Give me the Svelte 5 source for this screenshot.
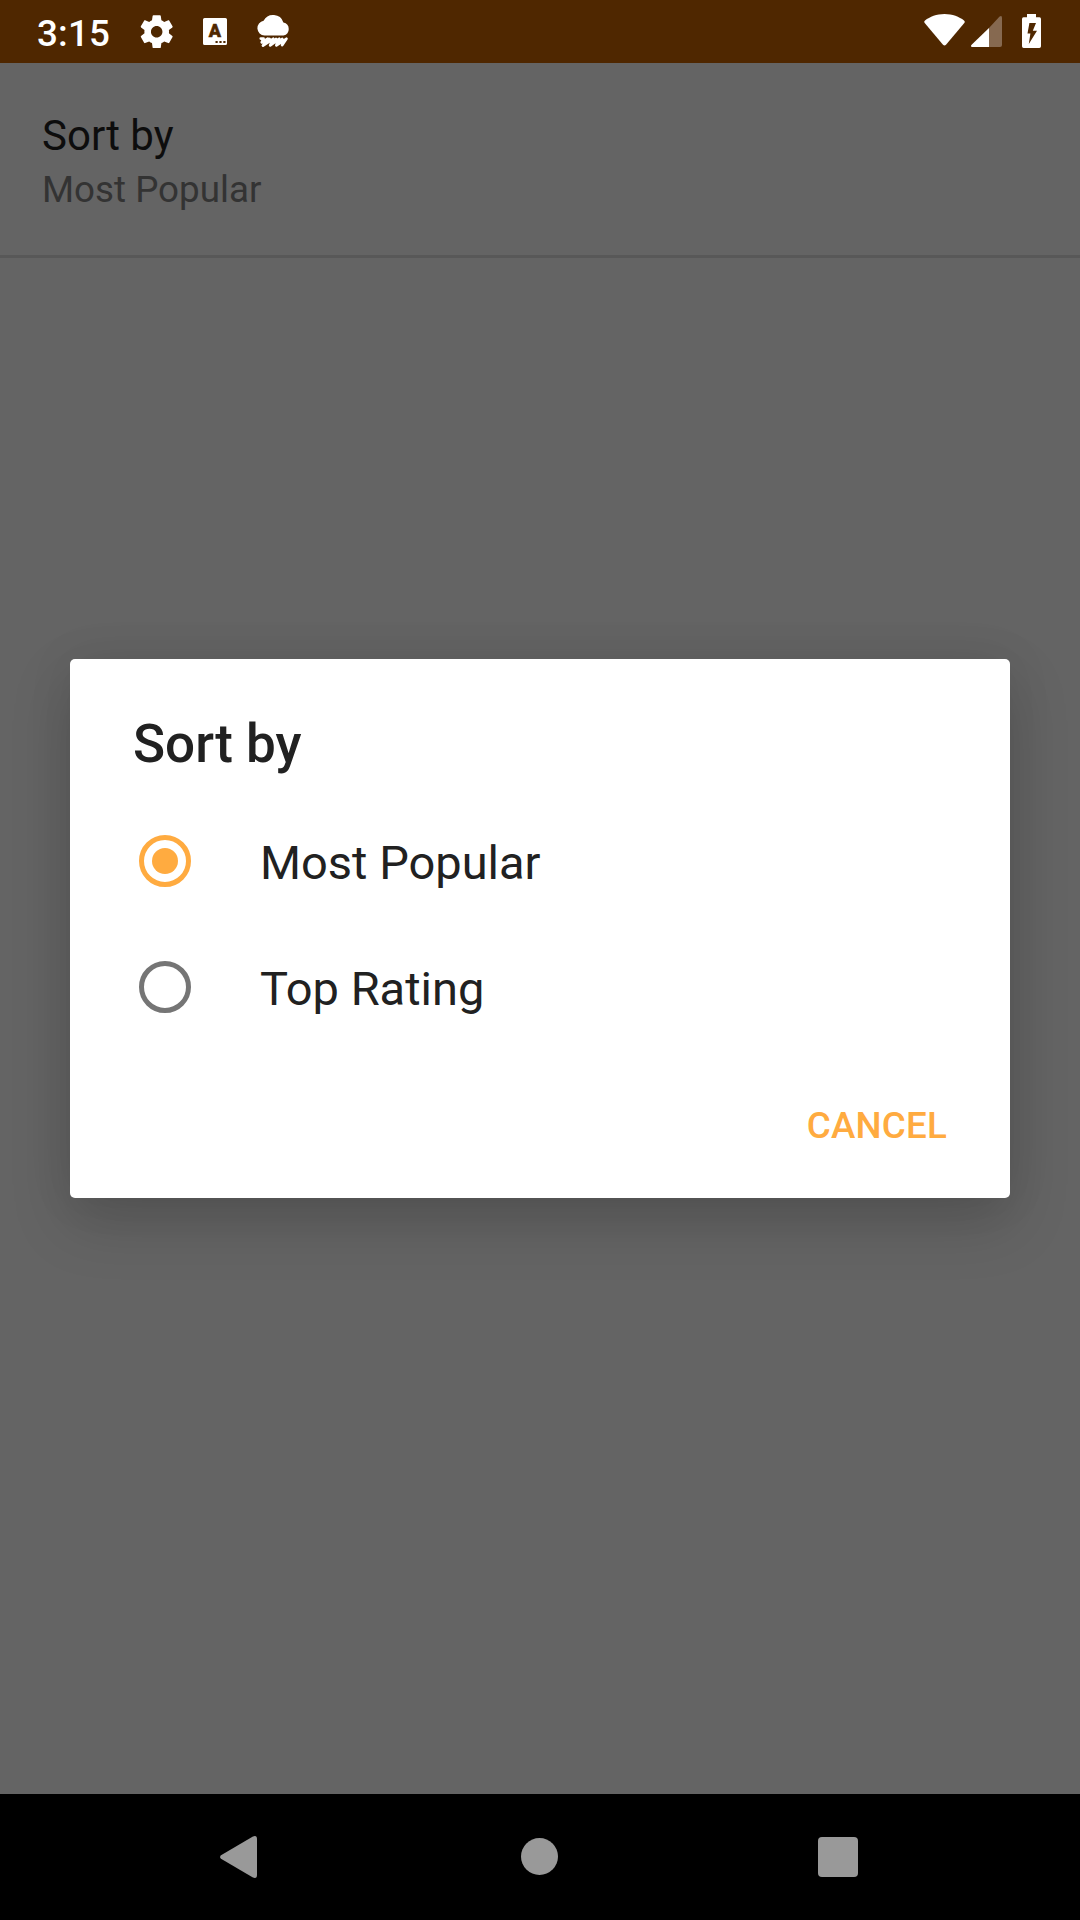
<script>
  let selected = $state('Most Popular');
  const options = ['Most Popular', 'Top Rating'];
</script>

<div class="screen">
  <header class="status">
    <span class="time">3:15</span>
    <div class="notifications">
      <svg class="gear" viewBox="0 0 24 24"><path d="M19.43 12.98c.04-.32.07-.64.07-.98s-.03-.66-.07-.98l2.11-1.65c.19-.15.24-.42.12-.64l-2-3.46c-.12-.22-.39-.3-.61-.22l-2.49 1c-.52-.4-1.08-.73-1.69-.98l-.38-2.65C14.46 2.18 14.25 2 14 2h-4c-.25 0-.46.18-.49.42l-.38 2.65c-.61.25-1.17.59-1.69.98l-2.49-1c-.23-.09-.49 0-.61.22l-2 3.46c-.13.22-.07.49.12.64l2.11 1.65c-.04.32-.07.65-.07.98s.03.66.07.98l-2.11 1.65c-.19.15-.24.42-.12.64l2 3.46c.12.22.39.3.61.22l2.49-1c.52.4 1.08.73 1.69.98l.38 2.65c.03.24.24.42.49.42h4c.25 0 .46-.18.49-.42l.38-2.65c.61-.25 1.17-.59 1.69-.98l2.49 1c.23.09.49 0 .61-.22l2-3.46c.12-.22.07-.49-.12-.64l-2.11-1.65zM12 15.5c-1.93 0-3.5-1.57-3.5-3.5s1.57-3.5 3.5-3.5 3.5 1.57 3.5 3.5-1.57 3.5-3.5 3.5z" /></svg>
      <svg class="letter" viewBox="0 0 24 27">
        <path fill-rule="evenodd" d="M1.6 0H22.4Q24 0 24 1.6V25.4Q24 27 22.4 27H1.6Q0 27 0 25.4V1.6Q0 0 1.6 0ZM12.5 22.9V25.1H14.7V22.9ZM16.4 22.9V25.1H18.6V22.9ZM20.3 22.9V25.1H22.5V22.9Z" />
        <text x="12" y="19.2" text-anchor="middle">A</text>
      </svg>
      <svg class="rain" viewBox="0 0 33 34">
        <path d="M7.5 21.5A7.4 7.4 0 0 1 6.6 6.8A10.8 10.8 0 0 1 26.4 8.4A6.7 6.7 0 0 1 26.5 21.5Z" />
        <path class="drops" d="M3.8 24.6H6.5L4.8 28.4L10.8 24.8L6 31.6L16.2 24.8L13.2 31.4L22.2 24.8L19.4 31.4L29.4 24.8L25.2 31M8.5 28.6L12.5 25M14.8 29L19 25M21 29L25.2 25" />
      </svg>
    </div>
    <div class="system">
      <svg class="wifi" viewBox="0 0 41 32"><path d="M20.5 0C12.7 0 5.7 2.8 1 6.4Q-.4 7.6.7 9L19 30.8Q20.5 32.4 22 30.8L40.3 9Q41.4 7.6 40 6.4C35.3 2.8 28.3 0 20.5 0Z" /></svg>
      <svg class="signal" viewBox="0 0 31 31"><path class="dim" d="M18 12L28.6.6Q31-1 31 2V29Q31 31 29 31H18Z" /><path d="M18 12V31H1.2Q-1 30.8.6 28.8Z" /></svg>
      <svg class="battery" viewBox="0 0 19 34"><path fill-rule="evenodd" d="M5 0H14V3.3H17.5Q19 3.3 19 5V32.3Q19 34 17.3 34H1.7Q0 34 0 32.3V5Q0 3.3 1.5 3.3H5ZM7.4 9L5.5 19.5H8.4L6.8 30L15 16.7H10.8L14 9Z" /></svg>
    </div>
  </header>

  <main>
    <section class="preference">
      <div class="pref-title">Sort by</div>
      <div class="pref-summary">{selected}</div>
    </section>

    <div class="dialog" role="dialog" aria-label="Sort by">
      <h2>Sort by</h2>
      <div class="options" role="radiogroup" aria-label="Sort by">
        {#each options as option}
          <button class="option" role="radio" aria-checked={selected === option} onclick={() => (selected = option)}>
            <span class="radio" class:checked={selected === option}></span>
            <span class="label">{option}</span>
          </button>
        {/each}
      </div>
      <div class="actions"><button class="cancel">CANCEL</button></div>
    </div>
  </main>

  <nav>
    <svg class="back" viewBox="0 0 37 42"><path d="M1 19.2L32.5.7Q37-1.3 37 3V39Q37 43.3 32.5 41.3L1 22.8Q-.9 21 1 19.2Z" /></svg>
    <svg class="home" viewBox="0 0 37 37"><circle cx="18.5" cy="18.5" r="18.5" /></svg>
    <span class="recents"></span>
  </nav>
</div>

<style>
  :global(body) { margin: 0; background: #646464; }
  .screen {
    display: flex;
    flex-direction: column;
    width: 1080px;
    height: 1920px;
    overflow: hidden;
    background: #646464;
    font-family: Roboto, sans-serif;
  }
  svg { display: block; fill: #fff; flex: none; }
  button { border: 0; background: none; padding: 0; font: inherit; text-align: left; }

  .status {
    display: flex;
    align-items: flex-start;
    box-sizing: border-box;
    height: 63px;
    flex: none;
    padding: 0 39px 0 37px;
    background: #4f2700;
    color: #fff;
  }
  .time { width: 100px; padding-top: 12px; font-size: 36.75px; line-height: 44px; font-weight: 500; letter-spacing: 0.2px; }
  .notifications { display: flex; align-items: flex-start; }
  .gear { width: 39.4px; height: 39.4px; margin-top: 12px; }
  .letter { width: 24px; height: 27px; margin: 18px 0 0 26.6px; }
  .letter text { font-size: 18px; font-weight: 900; fill: #4f2700; stroke: #4f2700; stroke-width: 0.5; }
  .rain { width: 33px; height: 34px; margin: 14px 0 0 29.8px; overflow: visible; }
  .drops { fill: none; stroke: #fff; stroke-width: 2.8; stroke-linecap: round; stroke-linejoin: round; }
  .system { display: flex; align-items: flex-start; margin-left: auto; }
  .wifi { width: 41px; height: 32px; margin: 14px 6px 0 0; }
  .signal { width: 31px; height: 31px; margin: 16px 20px 0 0; }
  .dim { fill: #866950; }
  .battery { width: 19px; height: 34px; margin-top: 14px; }

  main { display: flex; flex-direction: column; flex: 1; }
  .preference {
    box-sizing: border-box;
    height: 195px;
    padding: 48px 42px 0;
    border-bottom: 3px solid #585858;
  }
  .pref-title { font-size: 42px; line-height: 50px; color: #0d0d0d; }
  .pref-summary { margin-top: 7px; font-size: 36.75px; line-height: 44px; color: #333; }

  .dialog {
    box-sizing: border-box;
    width: 940px;
    height: 539px;
    margin: 401px auto 0;
    padding-top: 54px;
    border-radius: 5px;
    background: #fff;
    box-shadow: 0 24px 60px rgba(0, 0, 0, 0.17), 0 0 48px rgba(0, 0, 0, 0.07);
    color: #212121;
  }
  h2 { margin: 0 63px; font-size: 53px; line-height: 62px; font-weight: 500; }
  .options { display: flex; flex-direction: column; margin-top: 23px; }
  .option { display: flex; align-items: center; height: 126px; padding-left: 68.5px; color: inherit; }
  .radio {
    display: grid;
    place-items: center;
    box-sizing: border-box;
    width: 52.5px;
    height: 52.5px;
    border: 5.25px solid #757575;
    border-radius: 50%;
  }
  .checked { border-color: #ffab40; }
  .checked::before { content: ''; width: 26.25px; height: 26.25px; border-radius: 50%; background: #ffab40; }
  .label { margin-left: 69px; padding-top: 4px; font-size: 47px; line-height: 56px; }
  .actions { display: flex; justify-content: flex-end; padding: 54px 63px 0 0; }
  .cancel { font-size: 36.75px; line-height: 44px; font-weight: 500; letter-spacing: 0.2px; color: #ffab40; }

  nav {
    display: flex;
    align-items: center;
    box-sizing: border-box;
    height: 126px;
    flex: none;
    padding-left: 220px;
    background: #000;
  }
  .back { width: 37px; height: 42px; fill: #999; }
  .home { width: 37px; height: 37px; margin: 0 0 1px 264px; fill: #999; }
  .recents { width: 40px; height: 40px; margin-left: 260px; border-radius: 4px; background: #999; }
</style>
